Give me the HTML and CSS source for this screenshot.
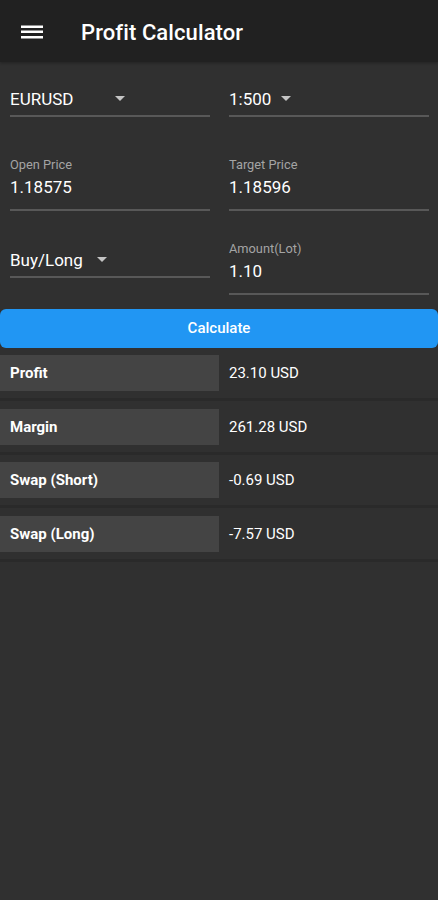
FILE: index.html
```html
<!DOCTYPE html>
<html lang="en">
<head>
	<meta charset="UTF-8">
	<title>Profit Calculator</title>
	<link rel="stylesheet" href="styles.css">
</head>
<body>
	<div class="app">
		<div class="topbar">
			<svg class="menu" width="22" height="14" viewBox="0 0 22 14"><rect x="0" y="0.5" width="22" height="2.5" fill="#fff"/><rect x="0" y="5.5" width="22" height="2.5" fill="#fff"/><rect x="0" y="11" width="22" height="2.5" fill="#fff"/></svg>
			<h1 class="title">Profit Calculator</h1>
		</div>

		<div class="form">
			<div class="row row1">
				<div class="col">
					<div class="select">
						<span class="sel_text sel_pair">EURUSD</span>
						<svg class="arrow" width="10" height="5" viewBox="0 0 10 5"><path d="M0 0L5 5L10 0Z" fill="#c4c4c4"/></svg>
					</div>
				</div>
				<div class="col">
					<div class="select">
						<span class="sel_text sel_lev">1:500</span>
						<svg class="arrow" width="10" height="5" viewBox="0 0 10 5"><path d="M0 0L5 5L10 0Z" fill="#c4c4c4"/></svg>
					</div>
				</div>
			</div>
			<div class="row row2">
				<div class="col">
					<div class="field">
						<div class="label">Open Price</div>
						<div class="value">1.18575</div>
					</div>
				</div>
				<div class="col">
					<div class="field">
						<div class="label">Target Price</div>
						<div class="value">1.18596</div>
					</div>
				</div>
			</div>
			<div class="row row3">
				<div class="col">
					<div class="select select_low">
						<span class="sel_text sel_side">Buy/Long</span>
						<svg class="arrow" width="10" height="5" viewBox="0 0 10 5"><path d="M0 0L5 5L10 0Z" fill="#c4c4c4"/></svg>
					</div>
				</div>
				<div class="col">
					<div class="field">
						<div class="label">Amount(Lot)</div>
						<div class="value">1.10</div>
					</div>
				</div>
			</div>
		</div>

		<a href="javascript:;" class="btn">Calculate</a>

		<ul class="result">
			<li><div class="res_name">Profit</div><div class="res_val">23.10 USD</div></li>
			<li><div class="res_name">Margin</div><div class="res_val">261.28 USD</div></li>
			<li><div class="res_name">Swap (Short)</div><div class="res_val">-0.69 USD</div></li>
			<li><div class="res_name">Swap (Long)</div><div class="res_val">-7.57 USD</div></li>
		</ul>
	</div>
</body>
</html>
```

FILE: styles.css
```css
body,div,ul,li,h1 {
	margin:0;
	padding:0;
}
ul {
	list-style: none;
}
a {
	text-decoration: none;
}
body {
	background-color: #303030;
	font-family: Roboto, "Liberation Sans", sans-serif;
	color:#fff;
}
.app {
	width:438px;
	min-height:900px;
}
.topbar {
	height:62px;
	background-color: #212121;
	display: flex;
	align-items: center;
	padding-left: 21px;
	box-shadow: 0 1px 3px rgba(0,0,0,0.3);
}
.menu {
	display: block;
	margin-top: 2px;
}
.title {
	margin-left: 38px;
	margin-top: 3px;
	font-size: 22px;
	font-weight: 500;
	letter-spacing: 0.1px;
}
.form {
	padding: 0 9px 0 10px;
}
.row {
	display: flex;
	gap:19px;
}
.col {
	width:200px;
}
.row1 {
	padding-top: 25px;
}
.row2 {
	margin-top: 39.5px;
}
.row3 {
	margin-top: 30px;
	align-items: flex-end;
}
.select {
	display: flex;
	align-items: center;
	height:24px;
	padding-bottom: 4px;
	border-bottom: 2px solid #585858;
	font-size: 17px;
}
.select_low {
	margin-bottom: 16.5px;
}
.sel_text {
	line-height: 24px;
}
.sel_pair {
	min-width:105px;
}
.sel_lev {
	min-width:52px;
}
.sel_side {
	min-width:87px;
}
.arrow {
	display: block;
	margin-top: -1px;
}
.field {
	padding-bottom: 10px;
	border-bottom: 2px solid #585858;
}
.label {
	font-size: 12.8px;
	line-height: 16px;
	color: #a4a4a4;
}
.value {
	margin-top: 2px;
	font-size: 17px;
	line-height: 24px;
}
.btn {
	display: block;
	margin-top: 14px;
	height:39px;
	line-height: 39px;
	background-color: #2196f3;
	border-radius: 6px;
	text-align: center;
	color:#fff;
	font-size: 15px;
	font-weight: 500;
}
.result li {
	display: flex;
	align-items: center;
	padding: 7.5px 0 7px;
	border-bottom: 3px solid #2a2a2a;
}
.res_name {
	width:209px;
	height:36px;
	line-height: 36px;
	padding-left: 10px;
	background-color: #444;
	font-size: 15px;
	font-weight: bold;
}
.res_val {
	padding-left: 10px;
	font-size: 15px;
}
```
